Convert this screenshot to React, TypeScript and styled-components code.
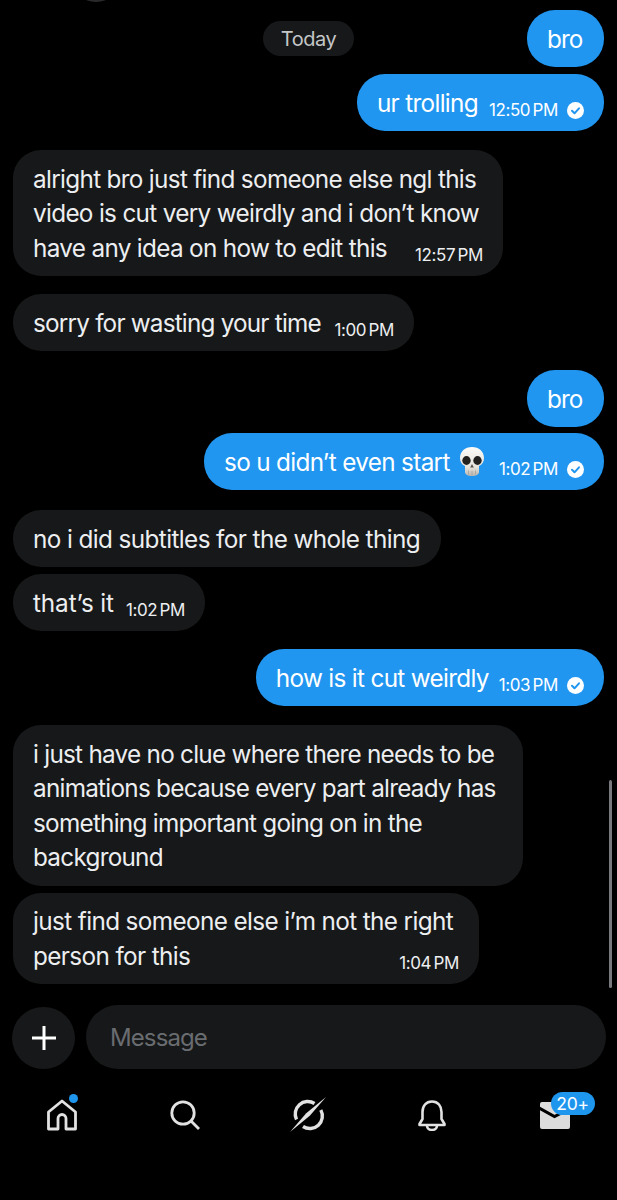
import React from "react";
import styled, { createGlobalStyle } from "styled-components";

const GlobalStyle = createGlobalStyle`
  html, body {
    margin: 0;
    padding: 0;
    background: #000;
  }
  body {
    font-family: "Inter", "Liberation Sans", sans-serif;
    overflow: hidden;
  }
`;

const Page = styled.div`
  position: relative;
  width: 617px;
  height: 1200px;
  background: #000;
  overflow: hidden;
  display: flex;
  flex-direction: column;
`;

const AvatarEdge = styled.div`
  position: absolute;
  top: -8px;
  left: 84px;
  width: 24px;
  height: 10px;
  border-radius: 50%;
  background: #2a2a2c;
`;

const Thread = styled.div`
  display: flex;
  flex-direction: column;
  padding: 10px 13px 0;
  height: 1005px;
  box-sizing: border-box;
`;

const TopRow = styled.div`
  display: grid;
  grid-template-columns: 1fr auto 1fr;
  align-items: center;
`;

const DatePill = styled.div`
  grid-column: 2;
  height: 35px;
  padding: 0 18px;
  border-radius: 18px;
  background: #171819;
  color: #c4c6c8;
  font-size: 20px;
  letter-spacing: -0.5px;
  display: flex;
  align-items: center;
`;

const Bubble = styled.div<{ $mine?: boolean; $top?: number; $width?: number; $track?: number }>`
  box-sizing: border-box;
  align-self: ${(p) => (p.$mine ? "flex-end" : "flex-start")};
  justify-self: end;
  grid-column: ${(p) => (p.$mine ? 3 : "auto")};
  margin-top: ${(p) => p.$top ?? 0}px;
  width: ${(p) => (p.$width ? `${p.$width}px` : "auto")};
  padding: 11.75px 20px 10.75px;
  border-radius: 28px;
  background: ${(p) => (p.$mine ? "#2196f0" : "#171819")};
  color: ${(p) => (p.$mine ? "#fff" : "#eceef0")};
  font-size: 24.3px;
  letter-spacing: ${(p) => p.$track ?? -0.68}px;
  line-height: 34.5px;
  white-space: nowrap;
`;

const Foot = styled.div<{ $gap?: number }>`
  display: flex;
  justify-content: space-between;
  align-items: flex-end;
  gap: ${(p) => p.$gap ?? 10}px;
`;

const Time = styled.span`
  display: flex;
  align-items: center;
  gap: 9px;
  font-size: 17px;
  letter-spacing: -0.4px;
  word-spacing: -2px;
  line-height: 20px;
`;

const Skull = styled.svg`
  margin-left: 4px;
  vertical-align: -5px;
`;

const Scrollbar = styled.div`
  position: absolute;
  top: 780px;
  left: 609px;
  width: 3px;
  height: 208px;
  border-radius: 2px;
  background: #77797c;
`;

const Composer = styled.div`
  display: flex;
  align-items: center;
  gap: 11px;
  padding: 0 11px 0 12px;
`;

const PlusButton = styled.div`
  width: 63px;
  height: 62px;
  margin-top: 2px;
  border-radius: 50%;
  background: #171819;
  display: flex;
  align-items: center;
  justify-content: center;
  flex: none;
`;

const MessageInput = styled.div`
  flex: 1;
  height: 64px;
  border-radius: 32px;
  background: #171819;
  color: #696c70;
  font-size: 24px;
  letter-spacing: -0.9px;
  display: flex;
  align-items: center;
  padding-left: 24px;
`;

const TabBar = styled.nav`
  display: grid;
  grid-template-columns: repeat(5, 1fr);
  padding-top: 26px;
`;

const Tab = styled.div`
  position: relative;
  height: 40px;
  display: flex;
  align-items: center;
  justify-content: center;
`;

const TabDot = styled.span`
  position: absolute;
  top: -1.5px;
  left: 68.5px;
  width: 9px;
  height: 9px;
  border-radius: 50%;
  background: #1f96ee;
`;

const Badge = styled.span`
  position: absolute;
  top: -3px;
  left: 57px;
  width: 44px;
  height: 23px;
  border-radius: 12px;
  background: #1f96ee;
  color: #fff;
  font-size: 17.5px;
  letter-spacing: -0.2px;
  display: flex;
  align-items: center;
  justify-content: center;
`;

function ReadTick() {
  return (
    <svg width="17" height="17" viewBox="0 0 17 17">
      <circle cx="8.5" cy="8.5" r="8.5" fill="#fff" />
      <path d="M5 8.8l2.5 2.5L12 6.3" fill="none" stroke="#2196f0" strokeWidth="2" strokeLinecap="round" strokeLinejoin="round" />
    </svg>
  );
}

function SkullEmoji() {
  return (
    <Skull width="24" height="29" viewBox="0 0 24 29">
      <defs>
        <linearGradient id="bone" x1="0" y1="0" x2="0" y2="1">
          <stop offset="0" stopColor="#fbfbf8" />
          <stop offset="0.7" stopColor="#e6e3dc" />
          <stop offset="1" stopColor="#b9b6b0" />
        </linearGradient>
      </defs>
      <path d="M12 0C5 0 0 4.5 0 11c0 4 1.8 6.5 5 8v6c0 2.5 3 4 7 4s7-1.500 7-4v-6c3.200-1.500 5-4 5-8C24 4.500 19 0 12 0z" fill="url(#bone)" />
      <ellipse cx="6.500" cy="13.500" rx="4.200" ry="4.400" fill="#23211f" />
      <ellipse cx="17.500" cy="13.500" rx="4.200" ry="4.400" fill="#23211f" />
      <path d="M12 17l-1.800 3.500h3.600z" fill="#55524e" />
      <path d="M8.500 23.500v4M12 24v4.500M15.500 23.500v4" stroke="#a5a29c" strokeWidth="0.9" />
    </Skull>
  );
}

function HomeIcon() {
  return (
    <svg width="32" height="32" viewBox="0 0 32 32">
      <path d="M2.500 13L16 2l13.500 11v17H20V19.500a4 4 0 0 0-8 0V30H2.500z" fill="none" stroke="#e2e2e2" strokeWidth="2.800" strokeLinejoin="round" />
    </svg>
  );
}

function SearchIcon() {
  return (
    <svg width="30" height="30" viewBox="0 0 30 30">
      <circle cx="13" cy="13" r="11.200" fill="none" stroke="#e2e2e2" strokeWidth="2.800" />
      <path d="M21 21l8 8" stroke="#e2e2e2" strokeWidth="2.800" />
    </svg>
  );
}

function OrbitIcon() {
  return (
    <svg width="36" height="36" viewBox="0 0 36 36">
      <path d="M24.500 6.500A12.500 12.500 0 0 0 6.500 22.500" fill="none" stroke="#e2e2e2" strokeWidth="3.400" />
      <path d="M30.800 13A12.500 12.500 0 0 1 13 29.500" fill="none" stroke="#e2e2e2" strokeWidth="3.400" />
      <path d="M36 0L19.800 18.800 0 35 16.200 16.200z" fill="#e2e2e2" />
    </svg>
  );
}

function BellIcon() {
  return (
    <svg width="28" height="31" viewBox="0 0 28 31">
      <path d="M14 1.500C8 1.500 4.500 6 4.500 12v7L1.500 24v1h25v-1l-3-5v-7C23.500 6 20 1.500 14 1.500z" fill="none" stroke="#e2e2e2" strokeWidth="2.600" strokeLinejoin="round" />
      <path d="M9 25.500a5 4.500 0 0 0 10 0" fill="none" stroke="#e2e2e2" strokeWidth="2.600" />
    </svg>
  );
}

function MailIcon() {
  return (
    <svg width="30" height="27" viewBox="0 0 30 27">
      <rect x="0" y="0" width="30" height="27" rx="2" fill="#dcdcdc" />
      <path d="M-1 6l15.500 8.500L31 6" fill="none" stroke="#000" strokeWidth="3" />
    </svg>
  );
}

export default function App() {
  return (
    <Page>
      <GlobalStyle />
      <AvatarEdge />
      <Thread>
        <TopRow>
          <DatePill>Today</DatePill>
          <Bubble $mine $track={-0.9} $width={77}>bro</Bubble>
        </TopRow>
        <Bubble $mine $top={7}>
          <Foot $gap={11}>
            ur trolling
            <Time>12:50 PM <ReadTick /></Time>
          </Foot>
        </Bubble>
        <Bubble $top={19} $width={490}>
          <div>alright bro just find someone else ngl this</div>
          <div>video is cut very weirdly and i don’t know</div>
          <Foot>
            have any idea on how to edit this
            <Time>12:57 PM</Time>
          </Foot>
        </Bubble>
        <Bubble $top={18} $track={-0.8} $width={401}>
          <Foot>
            sorry for wasting your time
            <Time>1:00 PM</Time>
          </Foot>
        </Bubble>
        <Bubble $mine $top={19} $track={-0.9} $width={77}>bro</Bubble>
        <Bubble $mine $top={6}>
          <Foot $gap={15}>
            <span>so u didn’t even start <SkullEmoji /></span>
            <Time>1:02 PM <ReadTick /></Time>
          </Foot>
        </Bubble>
        <Bubble $top={20} $track={-0.6} $width={428}>no i did subtitles for the whole thing</Bubble>
        <Bubble $top={7} $track={-0.1} $width={192}>
          <Foot>
            that’s it
            <Time>1:02 PM</Time>
          </Foot>
        </Bubble>
        <Bubble $mine $top={18}>
          <Foot>
            how is it cut weirdly
            <Time>1:03 PM <ReadTick /></Time>
          </Foot>
        </Bubble>
        <Bubble $top={19} $width={510} $track={-0.74}>
          <div>i just have no clue where there needs to be</div>
          <div>animations because every part already has</div>
          <div>something important going on in the</div>
          <div>background</div>
        </Bubble>
        <Bubble $top={7} $width={466} $track={-0.62}>
          <div>just find someone else i’m not the right</div>
          <Foot>
            person for this
            <Time>1:04 PM</Time>
          </Foot>
        </Bubble>
      </Thread>
      <Scrollbar />
      <Composer>
        <PlusButton>
          <svg width="24" height="24" viewBox="0 0 24 24">
            <path d="M12 0v24M0 12h24" stroke="#fff" strokeWidth="3" />
          </svg>
        </PlusButton>
        <MessageInput>Message</MessageInput>
      </Composer>
      <TabBar>
        <Tab><HomeIcon /><TabDot /></Tab>
        <Tab><SearchIcon /></Tab>
        <Tab><OrbitIcon /></Tab>
        <Tab><BellIcon /></Tab>
        <Tab><MailIcon /><Badge>20+</Badge></Tab>
      </TabBar>
    </Page>
  );
}
